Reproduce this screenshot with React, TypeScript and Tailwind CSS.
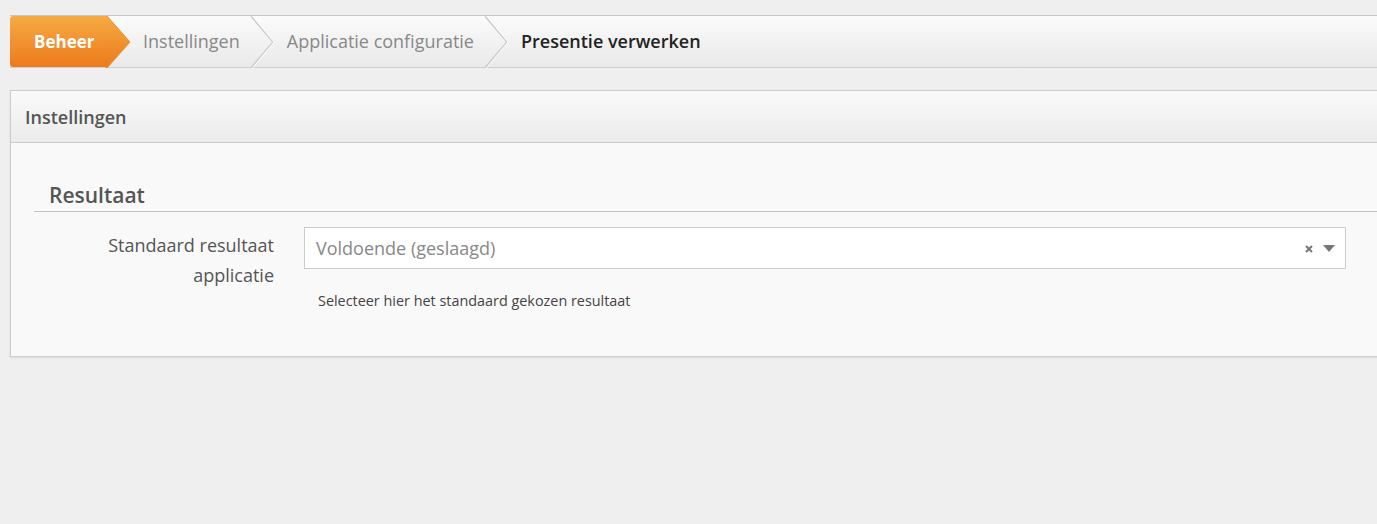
import { ReactNode } from "react"

const font = { fontFamily: '"Open Sans", "Noto Sans", Arial, sans-serif' }

function Chevron() {
  return (
    <svg width="23" height="52" viewBox="0 0 23 52" className="shrink-0 self-stretch">
      <polyline points="0,0 22,26 0,52" fill="none" stroke="#c9c9c9" strokeWidth="1.5" />
      <polyline points="1.5,0 23,26 1.5,52" fill="none" stroke="#ffffff" strokeWidth="1" />
    </svg>
  )
}

function Crumb({ children, active, last }: { children: ReactNode; active?: boolean; last?: boolean }) {
  return (
    <div className="flex items-stretch">
      <span
        className={
          "flex items-center pl-[13px] pr-[11px] text-[18px] " +
          (active ? "font-semibold text-[#222]" : "text-[#888]")
        }
      >
        {children}
      </span>
      {!last && <Chevron />}
    </div>
  )
}

export default function App() {
  return (
    <div className="min-h-[524px] w-full overflow-hidden bg-[#efefef]" style={font}>
      {/* breadcrumb */}
      <div className="pt-[15px] pl-[10px]">
        <div className="flex h-[53px] items-stretch border-t border-b border-t-[#c6c6c6] border-b-[#cfcfcf] bg-gradient-to-b from-[#fbfbfb] to-[#e9e9e9]">
          <div className="flex items-stretch">
            <span className="flex w-[96px] items-center rounded-l-[3px] bg-gradient-to-b from-[#f5aa42] to-[#ec7a1b] pl-[24px] text-[17px] font-bold text-white">
              Beheer
            </span>
            <svg width="24" height="52" viewBox="0 0 24 52" className="shrink-0 self-stretch">
              <defs>
                <linearGradient id="og" x1="0" y1="0" x2="0" y2="1">
                  <stop offset="0" stopColor="#f5aa42" />
                  <stop offset="1" stopColor="#ec7a1b" />
                </linearGradient>
              </defs>
              <polygon points="0,0 1,0 24,26 1,52 0,52" fill="url(#og)" />
              <polyline points="1,0 24,26 1,52" fill="none" stroke="#e9922f" strokeWidth="1" />
            </svg>
          </div>
          <Crumb>Instellingen</Crumb>
          <Crumb>Applicatie configuratie</Crumb>
          <Crumb active last>
            Presentie verwerken
          </Crumb>
        </div>
      </div>

      {/* panel */}
      <div className="mt-[22px] ml-[10px] w-[1368px] border border-[#cccccc] bg-[#f9f9f9] shadow-[0_1px_2px_rgba(0,0,0,0.08)]">
        <div className="flex h-[52px] items-center border-b border-[#cccccc] bg-gradient-to-b from-[#fafafa] to-[#ebebeb] px-[14px] pt-px">
          <h2 className="text-[18px] font-semibold text-[#555]">Instellingen</h2>
        </div>
        <div className="pl-[23px] pt-[38px] pb-[45px]">
          <div className="border-b border-[#c4c4c4] pb-px pl-[15px]">
            <h3 className="text-[21px] leading-[29px] font-semibold text-[#555]">Resultaat</h3>
          </div>
          <div className="mt-[15px] flex gap-[30px] pr-[31px]">
            <label className="w-[240px] shrink-0 pt-[3px] text-right text-[18px] leading-[30px] text-[#555]">
              Standaard resultaat applicatie
            </label>
            <div className="flex-1">
              <div className="flex h-[42px] items-center border border-[#cccccc] bg-white pl-[11px] pr-[10px]">
                <span className="flex-1 text-[18px] text-[#888]">Voldoende (geslaagd)</span>
                <svg width="8" height="8" viewBox="0 0 8 8" className="mr-[10px] mt-[2px]">
                  <path d="M1 1 L7 7 M7 1 L1 7" stroke="#777" strokeWidth="2" />
                </svg>
                <svg width="12" height="7" viewBox="0 0 12 7">
                  <polygon points="0,0 12,0 6,7" fill="#777" />
                </svg>
              </div>
              <p className="mt-[22px] pl-[14px] text-[14.4px] leading-[20px] text-[#444]">
                Selecteer hier het standaard gekozen resultaat
              </p>
            </div>
          </div>
        </div>
      </div>
    </div>
  )
}
